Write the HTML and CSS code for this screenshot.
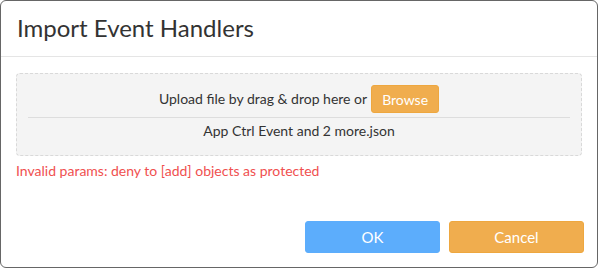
FILE: index.html
```html
<!DOCTYPE html>
<html lang="en">
<head>
<meta charset="utf-8">
<title>Import Event Handlers</title>
<link rel="stylesheet" href="styles.css">
</head>
<body>
<div class="dialog">
  <div class="dialog-header">
    <h1 class="dialog-title">Import Event Handlers</h1>
  </div>
  <div class="dialog-body">
    <div class="dropzone">
      <div class="upload-row">
        <span class="upload-text">Upload file by drag &amp; drop here or</span>
        <button class="btn btn-browse" type="button">Browse</button>
      </div>
      <div class="file-row">App Ctrl Event and 2 more.json</div>
    </div>
    <div class="error-text">Invalid params: deny to [add] objects as protected</div>
  </div>
  <div class="dialog-footer">
    <button class="btn btn-ok" type="button">OK</button>
    <button class="btn btn-cancel" type="button">Cancel</button>
  </div>
</div>
</body>
</html>
```

FILE: styles.css
```css
html, body {
  margin: 0;
  padding: 0;
  background: #ffffff;
}

body {
  font-family: Lato, "Open Sans", "Liberation Sans", sans-serif;
  font-size: 14px;
  color: #333333;
}

.dialog {
  box-sizing: border-box;
  width: 598px;
  height: 268px;
  border: 1px solid #666666;
  border-radius: 6px;
  background: #ffffff;
  display: flex;
  flex-direction: column;
  overflow: hidden;
}

.dialog-header {
  height: 56px;
  box-sizing: border-box;
  padding: 12px 16px 0;
  border-bottom: 1px solid #e5e5e5;
}

.dialog-title {
  margin: 0;
  font-size: 24px;
  font-weight: 400;
  line-height: 30px;
  color: #333333;
}

.dialog-body {
  padding: 16px 15px 0;
}

.dropzone {
  border: 1px dashed #d9d9d9;
  border-radius: 4px;
  background: #f4f4f4;
  padding: 0 11px;
}

.upload-row {
  display: flex;
  align-items: center;
  justify-content: center;
  gap: 4px;
  padding: 11px 0 4px;
  border-bottom: 1px solid #dddddd;
  line-height: 20px;
}

.file-row {
  text-align: center;
  line-height: 20px;
  padding: 3px 0 14px;
}

.btn {
  font-family: inherit;
  font-size: 14px;
  color: #ffffff;
  border-radius: 3px;
  cursor: pointer;
  margin: 0;
}

.btn-browse {
  height: 28px;
  padding: 0 10px;
  background: #f0ad4e;
  border: 1px solid #eea73f;
  font-size: 14px;
}

.error-text {
  margin-top: 5px;
  color: #f0504f;
  line-height: 20px;
}

.dialog-footer {
  margin-top: auto;
  display: flex;
  justify-content: flex-end;
  gap: 9px;
  padding: 0 13px 14px;
}

.btn-ok,
.btn-cancel {
  width: 135px;
  height: 32px;
  font-size: 15px;
}

.btn-ok {
  background: #5cadfc;
  border: 1px solid #5cadfc;
}

.btn-cancel {
  background: #f0ad4e;
  border: 1px solid #eea73f;
}
```
